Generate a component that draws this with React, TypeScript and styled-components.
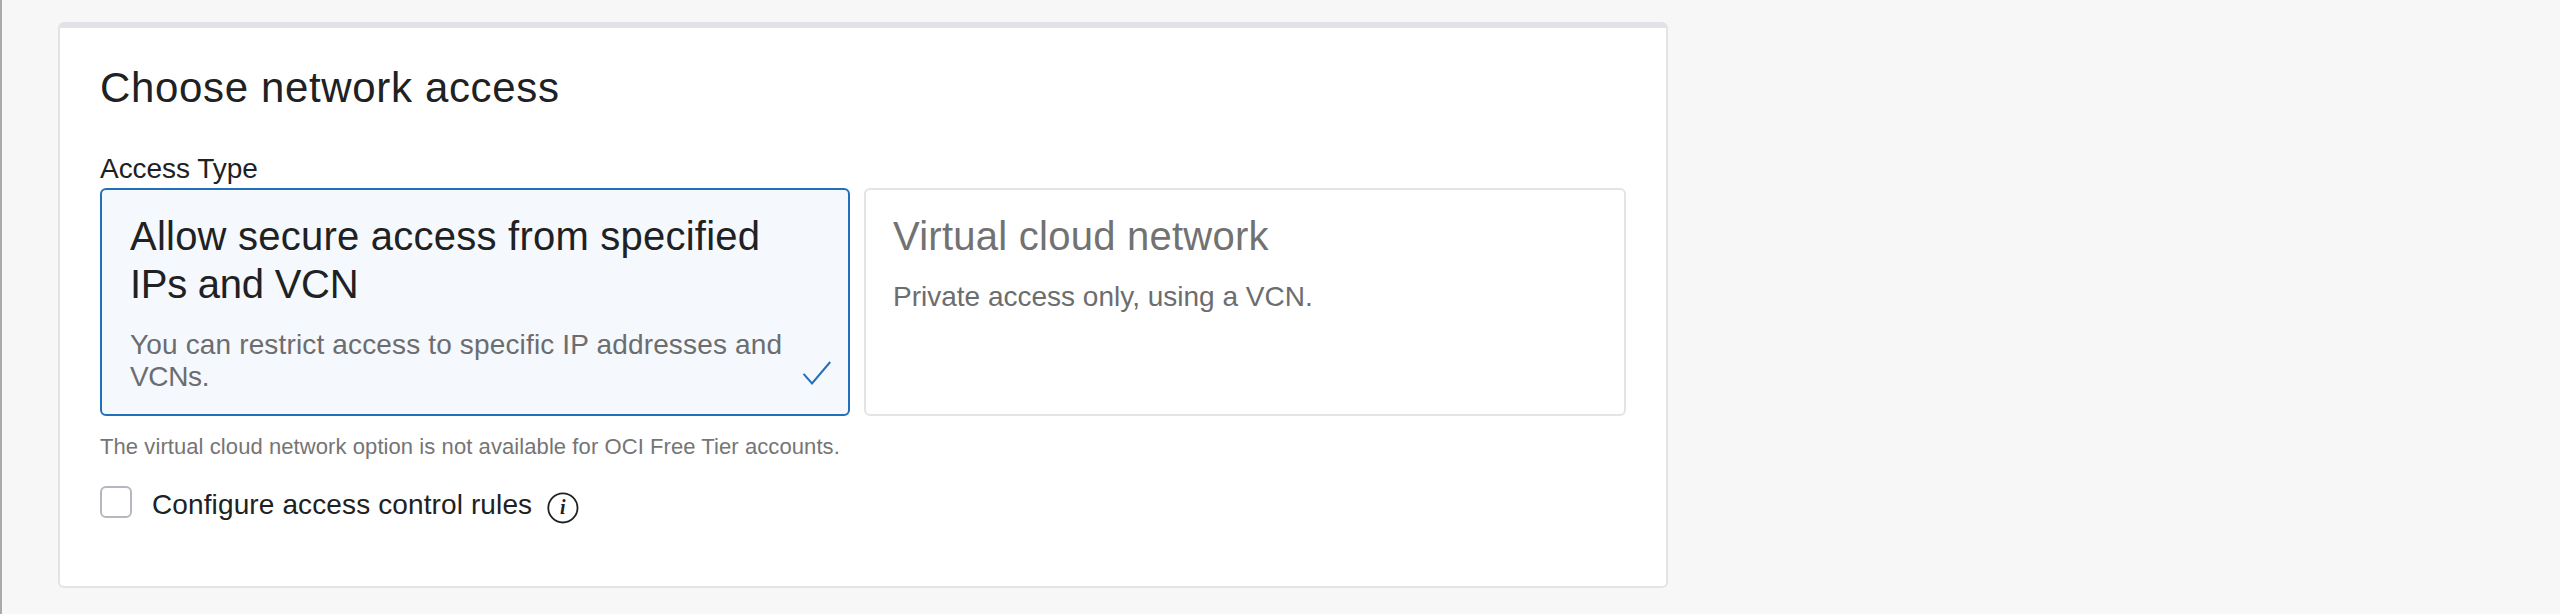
import React from 'react';
import styled, { createGlobalStyle } from 'styled-components';

const Global = createGlobalStyle`
  * { box-sizing: border-box; }
  body { margin: 0; background: #f7f7f7; font-family: "Liberation Sans", Arial, sans-serif; color: #202122; }
`;

const Page = styled.main`
  height: 614px;
  border-left: 2px solid #aaaaac;
  padding: 22px 0 0 56px;
`;

const Panel = styled.section`
  width: 1610px;
  height: 566px;
  background: #fff;
  border: 2px solid #e2e3e5;
  border-top: 6px solid #e1e2e6;
  border-radius: 6px;
  padding: 32px 40px 0;
`;

const Heading = styled.h2`
  margin: 0;
  font-size: 42px;
  line-height: 56px;
  font-weight: 400;
  letter-spacing: 0.65px;
  white-space: nowrap;
`;

const Label = styled.div`
  margin-top: 34px;
  font-size: 28px;
  line-height: 38px;
  letter-spacing: -0.05px;
`;

const Cards = styled.div`
  display: grid;
  grid-template-columns: 750px 762px;
  gap: 14px;
  height: 228px;
`;

const Card = styled.div<{ $selected?: boolean }>`
  display: flex;
  flex-direction: column;
  position: relative;
  border: 2px solid ${p => (p.$selected ? '#2170b9' : '#e4e4e4')};
  background: ${p => (p.$selected ? '#f5f8fd' : '#fff')};
  color: ${p => (p.$selected ? '#202122' : '#727272')};
  border-radius: 6px;
  padding: 22px ${p => (p.$selected ? 28 : 27)}px 16px;
`;

const Title = styled.div`
  display: flex;
  flex-direction: column;
  font-size: 40px;
  line-height: 48px;
  white-space: nowrap;
`;

const Text = styled.div`
  display: flex;
  flex-direction: column;
  margin-top: 21px;
  font-size: 28px;
  line-height: 32px;
  color: #6c6d6e;
  white-space: nowrap;
`;

const Line = styled.span<{ $track?: number }>`
  letter-spacing: ${p => p.$track ?? 0}px;
`;

const Check = styled.svg`
  position: absolute;
  right: 16px;
  bottom: 26px;
`;

const Note = styled.div`
  margin-top: 15px;
  font-size: 22px;
  line-height: 32px;
  letter-spacing: 0.08px;
  color: #757575;
`;

const Row = styled.label`
  display: flex;
  align-items: flex-start;
  margin-top: 23px;
`;

const Box = styled.span`
  width: 32px;
  height: 32px;
  border: 2px solid #b4b8be;
  border-radius: 6px;
  background: #fff;
`;

const RowText = styled.span`
  margin: 3px 0 0 20px;
  font-size: 28px;
  line-height: 32px;
  letter-spacing: 0.12px;
`;

const Info = styled.svg`
  margin: 6px 0 0 15px;
`;

const InfoLetter = styled.text`
  font: italic bold 20px "Liberation Serif", "Times New Roman", serif;
  fill: #202122;
`;

export default function App() {
  return (
    <Page>
      <Global />
      <Panel>
        <Heading>Choose network access</Heading>
        <Label>Access Type</Label>
        <Cards>
          <Card $selected>
            <Title>
              <Line $track={0.23}>Allow secure access from specified</Line>
              <Line $track={-0.26}>IPs and VCN</Line>
            </Title>
            <Text>
              <Line $track={0.15}>You can restrict access to specific IP addresses and</Line>
              <Line $track={-0.35}>VCNs.</Line>
            </Text>
            <Check width="30" height="28" viewBox="0 0 30 28" fill="none" stroke="#2170b9" strokeWidth="2">
              <path d="M1.6 13.8 10 23.4 28.2 2" />
            </Check>
          </Card>
          <Card>
            <Title>
              <Line $track={0.25}>Virtual cloud network</Line>
            </Title>
            <Text>
              <Line>Private access only, using a VCN.</Line>
            </Text>
          </Card>
        </Cards>
        <Note>The virtual cloud network option is not available for OCI Free Tier accounts.</Note>
        <Row>
          <Box />
          <RowText>Configure access control rules</RowText>
          <Info width="32" height="32" viewBox="0 0 32 32">
            <circle cx="15.9" cy="15.9" r="14.6" fill="none" stroke="#202122" strokeWidth="1.8" />
            <InfoLetter x="12.9" y="22">i</InfoLetter>
          </Info>
        </Row>
      </Panel>
    </Page>
  );
}
